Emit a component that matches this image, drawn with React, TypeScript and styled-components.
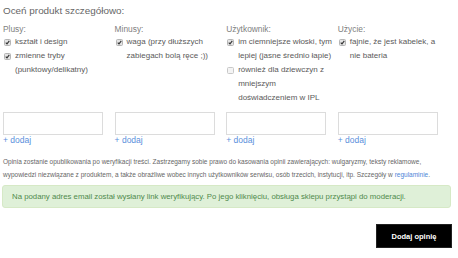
import React from "react";
import styled, { createGlobalStyle } from "styled-components";

const GlobalStyle = createGlobalStyle`
    html, body {
        margin: 0;
        padding: 0;
        background: #ffffff;
    }
    body {
        font-family: "Liberation Sans", Arial, sans-serif;
    }
`;

const Page = styled.div`
    width: 458px;
    height: 258px;
    overflow: hidden;
    padding: 0 7px 0 3px;
    box-sizing: border-box;
`;

const Stars = styled.svg`
    display: block;
    margin-left: 145px;
    width: 100px;
    height: 3px;
`;

const Title = styled.h3`
    margin: 0;
    font-size: 9.9px;
    line-height: 16px;
    font-weight: normal;
    color: #666;
`;

const Grid = styled.div`
    display: grid;
    grid-template-columns: repeat(4, 111.6px);
    grid-template-rows: auto auto;
    margin-top: 4px;
`;

const Column = styled.div`
    display: flex;
    flex-direction: column;
`;

const Heading = styled.div`
    font-size: 8.4px;
    line-height: 12px;
    color: #808080;
`;

const Item = styled.div`
    display: flex;
    align-items: flex-start;
    font-size: 8px;
    line-height: 14px;
    color: #5a5a5a;
    padding-left: 1px;
`;

const Box = styled.span<{ $checked: boolean }>`
    flex: none;
    width: 7px;
    height: 7px;
    margin: 3.5px 4px 0 0;
    box-sizing: border-box;
    border: 1px solid ${(p) => (p.$checked ? "#b5b5b5" : "#c8c8c8")};
    border-radius: 1.5px;
    background: ${(p) => (p.$checked ? "#e4e4e4" : "#f4f4f4")};
    display: flex;
    align-items: center;
    justify-content: center;
`;

const Label = styled.span`
    width: 98px;
`;

const InputBlock = styled.div`
    padding-top: 7px;
`;

const Field = styled.div`
    width: 100px;
    height: 23px;
    box-sizing: border-box;
    border: 1px solid #dcdcdc;
    background: #fff;
`;

const AddLink = styled.a`
    display: block;
    font-size: 8.5px;
    line-height: 11px;
    color: #5a8fdc;
    text-decoration: none;
`;

const Notice = styled.p`
    margin: 9px 0 0 0;
    font-size: 6.5px;
    line-height: 13px;
    color: #666;
    white-space: nowrap;
`;

const Regulamin = styled.a`
    color: #4d86d8;
    text-decoration: none;
`;

const Alert = styled.div`
    margin: 4px 0 0 -1px;
    height: 23px;
    box-sizing: border-box;
    display: flex;
    align-items: center;
    padding-left: 9px;
    background: #dff0d8;
    border: 1px solid #d6e9c6;
    border-radius: 3px;
    font-size: 7.8px;
    color: #4f8a4c;
    white-space: nowrap;
`;

const Footer = styled.div`
    display: flex;
    justify-content: flex-end;
    margin-top: 16px;
`;

const Submit = styled.button`
    width: 76px;
    height: 24px;
    border: 1px solid #222;
    background: #000;
    color: #fff;
    font-family: "Liberation Sans", Arial, sans-serif;
    font-weight: bold;
    font-size: 7.5px;
    padding: 0;
    margin-right: -1px;
`;

const Check = () => (
    <svg width="5" height="5" viewBox="0 0 10 10">
        <path d="M1.5 5.2 L4 7.8 L8.6 1.8" fill="none" stroke="#333" strokeWidth="2.2" />
    </svg>
);

type Entry = { text: string; checked: boolean };

const columns: { title: string; items: Entry[] }[] = [
    {
        title: "Plusy:",
        items: [
            { text: "kształt i design", checked: true },
            { text: "zmienne tryby (punktowy/delikatny)", checked: true },
        ],
    },
    {
        title: "Minusy:",
        items: [{ text: "waga (przy dłuższych zabiegach bolą ręce ;))", checked: true }],
    },
    {
        title: "Użytkownik:",
        items: [
            { text: "im ciemniejsze włoski, tym lepiej (jasne średnio łapie)", checked: true },
            { text: "również dla dziewczyn z mniejszym doświadczeniem w IPL", checked: false },
        ],
    },
    {
        title: "Użycie:",
        items: [{ text: "fajnie, że jest kabelek, a nie bateria", checked: true }],
    },
];

const starPath = (cx: number, cy: number, r: number) => {
    const pts: string[] = [];
    for (let i = 0; i < 10; i++) {
        const a = -Math.PI / 2 + (i * Math.PI) / 5;
        const rr = i % 2 === 0 ? r : r * 0.45;
        pts.push(`${(cx + rr * Math.cos(a)).toFixed(2)},${(cy + rr * Math.sin(a)).toFixed(2)}`);
    }
    return pts.join(" ");
};

const App: React.FC = () => {
    return (
        <>
            <GlobalStyle />
            <Page>
                {/* dolne końcówki gwiazdek z oceny powyżej */}
                <Stars viewBox="0 0 100 3">
                    {[12, 31, 50, 68, 87].map((x) => (
                        <polygon key={x} points={starPath(x, -5.5, 7)} fill="#f7dc94" />
                    ))}
                </Stars>
                <Title>Oceń produkt szczegółowo:</Title>
                <Grid>
                    {columns.map((col) => (
                        <Column key={col.title}>
                            <Heading>{col.title}</Heading>
                            {col.items.map((it) => (
                                <Item key={it.text}>
                                    <Box $checked={it.checked}>{it.checked && <Check />}</Box>
                                    <Label>{it.text}</Label>
                                </Item>
                            ))}
                        </Column>
                    ))}
                    {columns.map((col) => (
                        <InputBlock key={col.title + "-in"}>
                            <Field />
                            <AddLink href="#">+ dodaj</AddLink>
                        </InputBlock>
                    ))}
                </Grid>
                <Notice>
                    Opinia zostanie opublikowania po weryfikacji treści. Zastrzegamy sobie prawo do kasowania opinii zawierających: wulgaryzmy, teksty reklamowe,
                    <br />
                    wypowiedzi niezwiązane z produktem, a także obraźliwe wobec innych użytkowników serwisu, osób trzecich, instytucji, itp. Szczegóły w{" "}
                    <Regulamin href="#">regulaminie</Regulamin>.
                </Notice>
                <Alert>
                    Na podany adres email został wysłany link weryfikujący. Po jego kliknięciu, obsługa sklepu przystąpi do moderacji.
                </Alert>
                <Footer>
                    <Submit>Dodaj opinię</Submit>
                </Footer>
            </Page>
        </>
    );
};

export default App;
